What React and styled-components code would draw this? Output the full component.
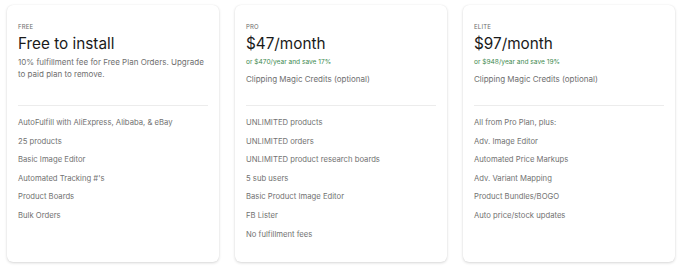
import React from 'react';
import styled, { createGlobalStyle } from 'styled-components';

const GlobalStyle = createGlobalStyle`
  body {
    margin: 0;
    background: #fff;
    font-family: Inter, "Noto Sans", sans-serif;
  }
`;

const plans = [
  {
    tier: 'FREE',
    price: 'Free to install',
    note: '10% fulfillment fee for Free Plan Orders. Upgrade to paid plan to remove.',
    features: [
      'AutoFulfill with AliExpress, Alibaba, & eBay',
      '25 products',
      'Basic Image Editor',
      "Automated Tracking #'s",
      'Product Boards',
      'Bulk Orders',
    ],
  },
  {
    tier: 'PRO',
    price: '$47/month',
    yearly: 'or $470/year and save 17%',
    note: 'Clipping Magic Credits (optional)',
    features: [
      'UNLIMITED products',
      'UNLIMITED orders',
      'UNLIMITED product research boards',
      '5 sub users',
      'Basic Product Image Editor',
      'FB Lister',
      'No fulfillment fees',
    ],
  },
  {
    tier: 'ELITE',
    price: '$97/month',
    yearly: 'or $948/year and save 19%',
    note: 'Clipping Magic Credits (optional)',
    features: [
      'All from Pro Plan, plus:',
      'Adv. Image Editor',
      'Automated Price Markups',
      'Adv. Variant Mapping',
      'Product Bundles/BOGO',
      'Auto price/stock updates',
    ],
  },
];

const Row = styled.div`
  display: grid;
  grid-template-columns: repeat(3, 212px);
  gap: 16px;
  padding: 5px 0 4px 7px;
  height: 266px;
  box-sizing: border-box;
`;

const Card = styled.div`
  background: #fff;
  border-radius: 6px;
  box-shadow: 0 1px 3px rgba(0, 0, 0, 0.16), 0 0 1px rgba(0, 0, 0, 0.08);
  padding: 17px 11px 0;
  display: flex;
  flex-direction: column;
`;

const Head = styled.div`
  height: 84px;
  border-bottom: 1px solid #ececec;
  box-sizing: border-box;
`;

const Tier = styled.div`
  font-size: 6px;
  color: #6b6b6b;
  letter-spacing: 0.2px;
  line-height: 9px;
`;

const Price = styled.div`
  font-size: 15.3px;
  color: #1a1a1a;
  line-height: 20px;
  margin-top: 3px;
`;

const Yearly = styled.div`
  font-size: 6.6px;
  color: #3d8a4f;
  line-height: 10px;
  margin-top: 3px;
`;

const Note = styled.div`
  font-size: 8px;
  color: #6f6f6f;
  line-height: 11.5px;
  margin-top: ${p => (p.$tight ? '7px' : '3px')};
`;

const List = styled.ul`
  list-style: none;
  margin: 0;
  padding: 11px 0 0;
  display: flex;
  flex-direction: column;
  gap: 7.4px;
`;

const Item = styled.li`
  font-size: 7.7px;
  color: #727272;
  line-height: 11.2px;
`;

export default function App() {
  return (
    <>
      <GlobalStyle />
      <Row>
        {plans.map(plan => (
          <Card key={plan.tier}>
            <Head>
              <Tier>{plan.tier}</Tier>
              <Price>{plan.price}</Price>
              {plan.yearly && <Yearly>{plan.yearly}</Yearly>}
              <Note $tight={!!plan.yearly}>{plan.note}</Note>
            </Head>
            <List>
              {plan.features.map(f => (
                <Item key={f}>{f}</Item>
              ))}
            </List>
          </Card>
        ))}
      </Row>
    </>
  );
}
